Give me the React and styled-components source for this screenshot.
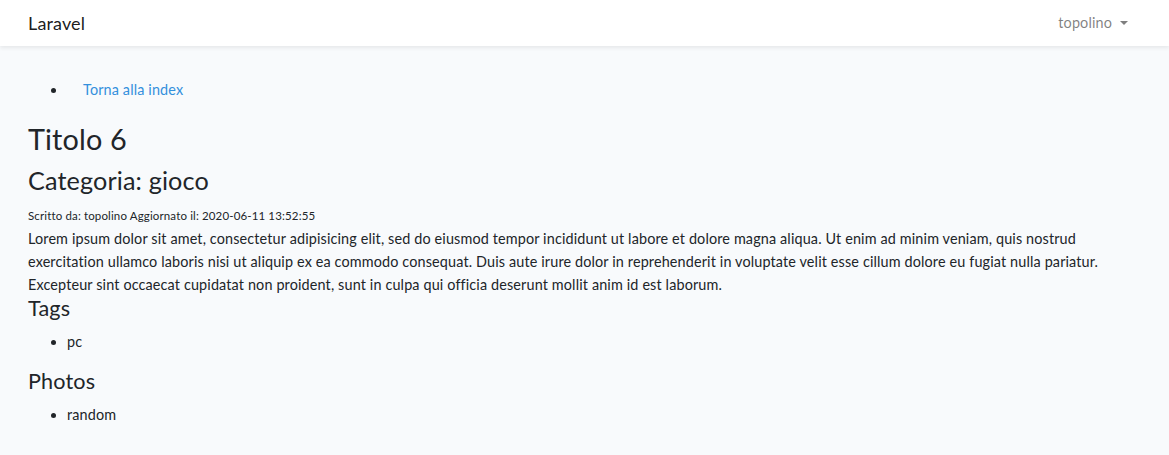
import React from "react";
import styled, { createGlobalStyle } from "styled-components";

const Global = createGlobalStyle`
  html, body { margin: 0; padding: 0; }
  body {
    background: #f8fafc;
    color: #212529;
    font-family: Lato, "Noto Sans", sans-serif;
    font-size: 14.4px;
    line-height: 1.6;
    letter-spacing: 0.14px;
  }
  * { box-sizing: border-box; }
`;

const NavBar = styled.nav`
  height: 46px;
  background: #fff;
  box-shadow: 0 2px 4px rgba(0, 0, 0, 0.075);
  display: flex;
  align-items: center;
  justify-content: space-between;
  padding: 0 33px 0 28px;
  position: relative;
`;

const Brand = styled.a`
  font-size: 18px;
  color: rgba(0, 0, 0, 0.9);
  text-decoration: none;
  line-height: 28px;
`;

const UserLink = styled.a`
  color: rgba(0, 0, 0, 0.5);
  text-decoration: none;
  padding: 0 8px;
  display: flex;
  align-items: center;
  &::after {
    content: "";
    display: inline-block;
    margin-left: 8px;
    border-top: 4px solid;
    border-left: 4px solid transparent;
    border-right: 4px solid transparent;
  }
`;

const Main = styled.main`
  padding: 24px 28px;
`;

const List = styled.ul`
  margin: 0 0 ${(p) => p.$mb ?? 16}px;
  padding-left: 39px;
`;

const NavLink = styled.a`
  display: block;
  padding: 8px 16px;
  color: #3490dc;
  text-decoration: none;
`;

const Heading = styled.div`
  font-size: ${(p) => p.$size}px;
  line-height: 1.2;
  font-weight: 400;
  margin: 0 0 8px;
`;

const Meta = styled.div`
  line-height: 23px;
  small {
    font-size: 11.5px;
  }
`;

const Body = styled.div``;

export default function App() {
  return (
    <>
      <Global />
      <NavBar>
        <Brand href="#">Laravel</Brand>
        <UserLink href="#">topolino</UserLink>
      </NavBar>
      <Main>
        <List $mb={13}>
          <li>
            <NavLink href="#">Torna alla index</NavLink>
          </li>
        </List>
        <Heading as="h2" $size={28.8}>Titolo 6</Heading>
        <Heading as="h3" $size={25.2}>Categoria: gioco</Heading>
        <Meta>
          <small>Scritto da: topolino Aggiornato il: 2020-06-11 13:52:55</small>
        </Meta>
        <Body>
          Lorem ipsum dolor sit amet, consectetur adipisicing elit, sed do eiusmod tempor
          incididunt ut labore et dolore magna aliqua. Ut enim ad minim veniam, quis nostrud
          exercitation ullamco laboris nisi ut aliquip ex ea commodo consequat. Duis aute irure
          dolor in reprehenderit in voluptate velit esse cillum dolore eu fugiat nulla pariatur.
          Excepteur sint occaecat cupidatat non proident, sunt in culpa qui officia deserunt
          mollit anim id est laborum.
        </Body>
        <Heading as="h4" $size={21.6}>Tags</Heading>
        <List>
          <li>pc</li>
        </List>
        <Heading as="h4" $size={21.6}>Photos</Heading>
        <List>
          <li>random</li>
        </List>
      </Main>
    </>
  );
}
